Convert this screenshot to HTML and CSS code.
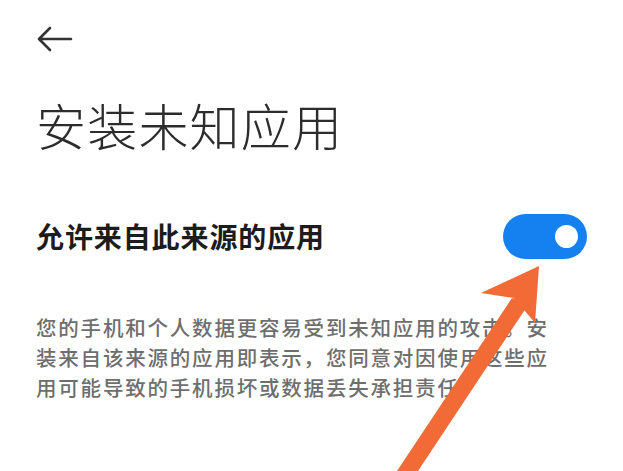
FILE: index.html
```html
<!DOCTYPE html>
<html lang="zh-CN">
<head>
<meta charset="utf-8">
<link rel="stylesheet" href="styles.css">
</head>
<body>
<div class="page">
  <div class="topbar">
    <svg class="back" width="36" height="26" viewBox="0 0 36 26">
      <path d="M34 13 H3 M13 2 L2 13 L13 24" fill="none" stroke="#333" stroke-width="2.6" stroke-linecap="round" stroke-linejoin="round"/>
    </svg>
  </div>
  <h1 class="title">安装未知应用</h1>
  <div class="row">
    <div class="label">允许来自此来源的应用</div>
    <div class="switch"><span class="knob"></span></div>
  </div>
  <p class="desc">您的手机和个人数据更容易受到未知应用的攻击。安装来自该来源的应用即表示，您同意对因使用这些应用可能导致的手机损坏或数据丢失承担责任。</p>
  <svg class="pointer" width="623" height="471" viewBox="0 0 623 471">
    <path d="M397 471 L512 298 L530 302 L418 471 Z" fill="#f26a36"/>
    <path d="M539 266 L481 293 L514 298 L535 323 Z" fill="#f26a36"/>
  </svg>
</div>
</body>
</html>
```
FILE: styles.css
```css
* { box-sizing: border-box; }
html, body { margin: 0; padding: 0; background: #fff; }
body {
  font-family: "Noto Sans CJK SC", "Noto Sans", sans-serif;
  width: 623px;
  height: 471px;
  overflow: hidden;
}
.page {
  position: relative;
  height: 471px;
  padding: 0 36px;
}
.topbar {
  height: 80px;
  display: flex;
  align-items: flex-start;
  padding-top: 26px;
}
.back { display: block; margin-left: 1px; }
.title {
  margin: 0;
  font-size: 50px;
  font-weight: 300;
  line-height: 64px;
  color: #2c2c2c;
  letter-spacing: 1.2px;
  margin-top: 12px;
}
.row {
  display: flex;
  align-items: center;
  justify-content: space-between;
  margin-top: 56px;
  height: 48px;
}
.label {
  font-size: 28px;
  font-weight: 700;
  color: #1c1c1c;
  letter-spacing: 0.9px;
}
.switch {
  width: 84px;
  height: 45px;
  border-radius: 23px;
  background: #1580f0;
  position: relative;
}
.knob {
  position: absolute;
  width: 23px;
  height: 23px;
  border-radius: 50%;
  background: #fff;
  right: 9px;
  top: 11px;
}
.desc {
  margin: 52px 0 0 0;
  width: 530px;
  font-size: 20.5px;
  font-weight: 500;
  line-height: 30px;
  color: #6e6e6e;
  letter-spacing: 1.8px;
}
.pointer {
  position: absolute;
  left: 0;
  top: 0;
  pointer-events: none;
}
```
